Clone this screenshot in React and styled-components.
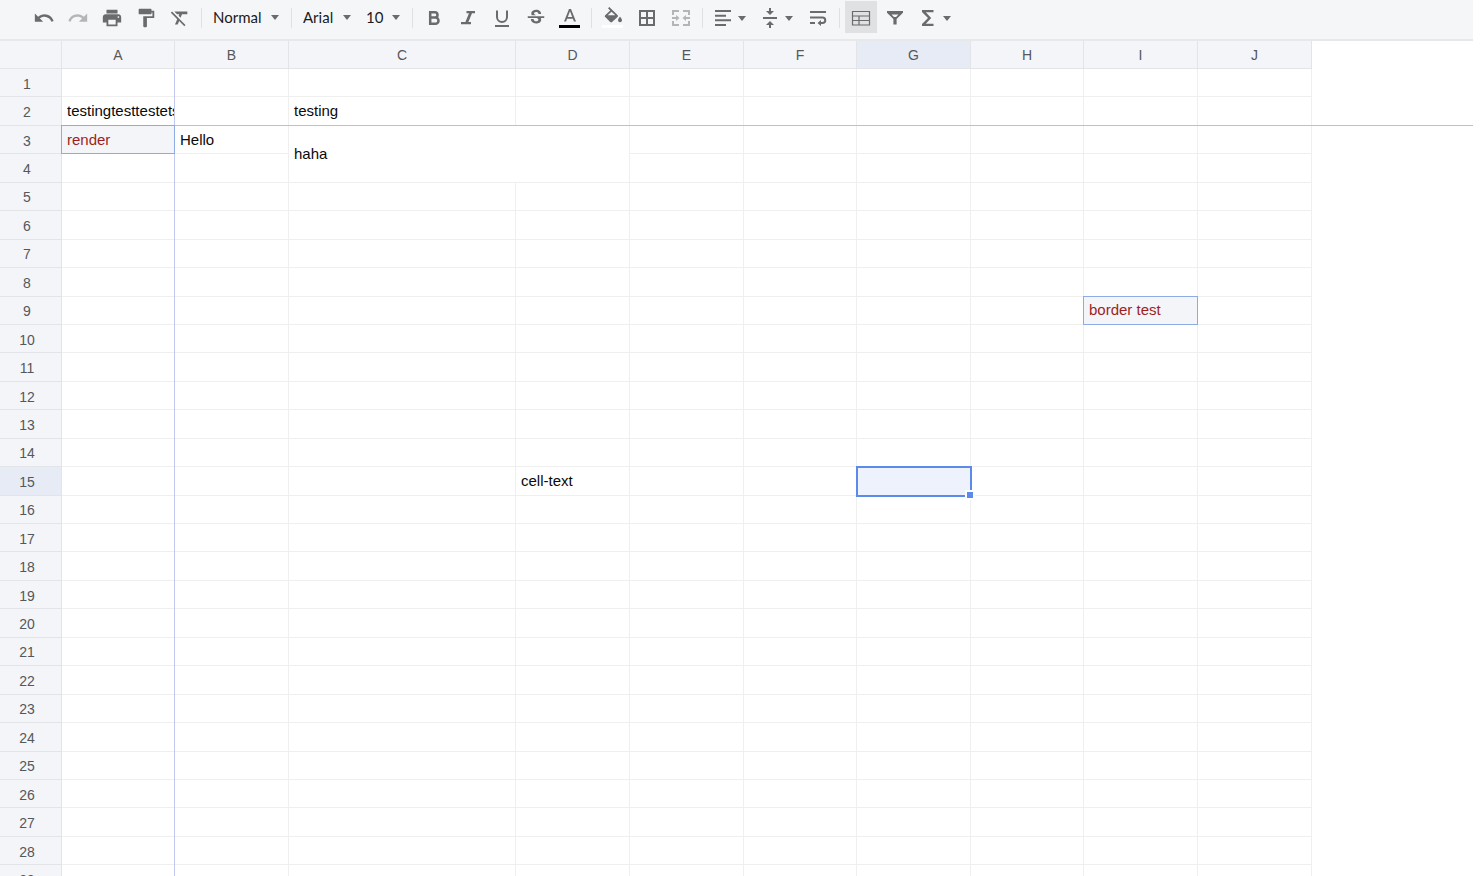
import { Fragment } from "react";
import styled, { createGlobalStyle, css } from "styled-components";
import {
  MdFormatClear,
  MdFormatPaint,
  MdPrint,
  MdRedo,
  MdStrikethroughS,
  MdUndo,
} from "react-icons/md";

const GlobalStyle = createGlobalStyle`
  * {
    box-sizing: border-box;
  }

  body {
    margin: 0;
    background: #fff;
    overflow: hidden;
  }
`;

const Page = styled.div`
  display: flex;
  flex-direction: column;
  height: 100vh;
  padding-right: 9px;
`;

const Toolbar = styled.div`
  display: flex;
  flex: none;
  align-items: flex-start;
  height: 41px;
  padding: 1px 0 0 27px;
  background: #f5f6f7;
  border-bottom: 2px solid #e7e8ea;
`;

const ToolButton = styled.button`
  display: flex;
  flex: none;
  align-items: center;
  justify-content: center;
  width: 32px;
  height: 32px;
  margin: 0 1px;
  padding: 2px 0 0;
  border: 0;
  background: ${(props) => (props.$active ? "#dfe1e2" : "transparent")};
  color: ${(props) => (props.$faded ? "#b4b5b6" : "#6a6b6c")};

  ${(props) =>
    props.$menu &&
    css`
      justify-content: flex-start;
      width: 45px;
      padding-left: 4px;
    `}

  svg {
    flex: none;
    width: 22px;
    height: 22px;
  }
`;

const Caret = styled.i`
  flex: none;
  margin-left: ${(props) => (props.$inButton ? "4px" : "0")};
  border: 4px solid transparent;
  border-top: 5px solid #6a6b6c;
  border-bottom: 0;
  pointer-events: none;
`;

const Divider = styled.span`
  flex: none;
  width: 1px;
  height: 20px;
  margin: 7px 4px 0;
  background: #dfe0e1;
`;

const Picker = styled.label`
  display: grid;
  flex: none;
  grid-template-columns: 1fr 8px;
  align-items: center;
  width: ${(props) => props.$width}px;
  height: 32px;
  padding: 0 8px 0 7px;
`;

const Select = styled.select`
  grid-area: 1 / 1 / 2 / 3;
  width: 100%;
  padding: 0;
  border: 0;
  appearance: none;
  background: transparent;
  color: #1b1b1b;
  font: 15px/20px Lato, sans-serif;

  & + ${Caret} {
    grid-area: 1 / 2;
  }
`;

const Sheet = styled.div`
  position: relative;
  flex: 1;
  min-height: 0;
  overflow: hidden;
`;

const Grid = styled.table`
  width: 1312px;
  table-layout: fixed;
  border-collapse: separate;
  border-spacing: 0;
  height: 853px;
`;

const HeadRow = styled.tr`
  height: 28px;
`;

const Head = styled.th`
  padding: 0;
  border: solid #e3e4e8;
  border-width: 0 1px 1px 0;
  background: ${(props) => (props.$current ? "#e6ebf6" : "#f4f5f8")};
  color: #56575a;
  font: 500 14px/26px "Liberation Sans", Arial, sans-serif;
  text-align: center;
`;

const RowHead = styled(Head)`
  padding: 2px 7px 0 0;
  line-height: 24px;
`;

const Cell = styled.td`
  position: relative;
  padding: 0 0 0 5px;
  border: solid #efeff0;
  border-width: 0 1px 1px 0;
  color: ${(props) => (props.$red ? "#9c1f1f" : "#0a0a0a")};
  background: ${(props) => (props.$red ? "#f4f5f8" : "transparent")};
  font: 15px/26px "Liberation Sans", Arial, sans-serif;

  ${(props) =>
    props.$red &&
    css`
      &::after {
        content: "";
        position: absolute;
        z-index: 1;
        inset: -1px;
        border: 1px solid #8dabe4;
      }
    `}
`;

const CellText = styled.div`
  overflow: hidden;
  white-space: nowrap;
`;

const Selection = styled.div`
  position: absolute;
  z-index: 1;
  inset: -1px -2px -2px -1px;
  border: 2px solid #5c8aea;
  background: #edf2fc;
`;

const FillHandle = styled.span`
  position: absolute;
  right: -5px;
  bottom: -5px;
  width: 10px;
  height: 10px;
  border: 2px solid #fff;
  background: #5c8aea;
`;

const FreezeLine = styled.span`
  position: absolute;
  background: #aac6e6;
  pointer-events: none;

  ${(props) =>
    props.$vertical
      ? css`
          top: 28px;
          bottom: 0;
          left: 174px;
          width: 1px;
          background: #c2c8f0;
        `
      : css`
          top: 84px;
          right: 0;
          left: 62px;
          height: 1px;
        `}
`;

const Glyph = ({ children }) => (
  <svg viewBox="0 0 22 22" fill="currentColor" aria-hidden="true">
    {children}
  </svg>
);

const Strokes = ({ d, width = 2 }) => (
  <Glyph>
    <path fill="none" stroke="currentColor" strokeWidth={width} d={d} />
  </Glyph>
);

const BoldIcon = () => (
  <Strokes
    width={2.5}
    d="M7.200 5.200h4.600a2.700 2.700 0 0 1 0 5.400H7.200zM7.200 10.600h5.200a3.100 3.100 0 0 1 0 6.200H7.200z"
  />
);

const ItalicIcon = () => (
  <Glyph>
    <path d="M9.500 4H18v2.200h-3l-3.600 8.800H14v2.200H4V15h4.400L12 6.200H9.500z" />
  </Glyph>
);

const UnderlineIcon = () => (
  <Strokes d="M6 3.500v6.500a5 5 0 0 0 10 0V3.500M4 19h14" />
);

const TextColorIcon = () => (
  <Glyph>
    <path d="M10 2 5 14.500h2.100l1-2.700h5.800l1 2.700H17L12 2h-2zM8.800 9.900 11 4.200l2.200 5.700H8.800z" />
    <path fill="#000" d="M0 18h21v3H0z" />
  </Glyph>
);

const FillColorIcon = () => (
  <Glyph>
    <path d="M15.500 7.900 7.300 0 6 1.300l2.200 2.100-5 4.800c-.6.6-.6 1.300 0 1.900l5 4.900c.6.500 1.300.500 1.900 0l5.400-5.100c.6-.6.6-1.500 0-2zM5.700 8.300l3.800-3.600 3.800 3.600zM18 9.800s-2 2.200-2 3.400a2 2 0 0 0 4 0c0-1.200-2-3.400-2-3.400z" />
    <path fill="#fff" d="M0 18h21v3H0z" />
  </Glyph>
);

const BordersIcon = () => (
  <Strokes d="M4 4h14v14H4zM11 4v14M4 11h14" />
);

const MergeIcon = () => (
  <Glyph>
    <path d="M2 3h7v2H4v3H2zM13 3h7v5h-2V5h-5zM2 14h2v3h5v2H2zM18 14h2v5h-7v-2h5zM2 10h4V8l3.500 3L6 14v-2H2zM20 10h-4V8l-3.500 3 3.500 3v-2h4z" />
  </Glyph>
);

const AlignLeftIcon = () => (
  <Strokes d="M3 4h16M3 8.700h11M3 13.300h16M3 18h11" />
);

const AlignMiddleIcon = () => (
  <Glyph>
    <path d="M4 10h14v2H4zM10 1h2v3h3l-4 4-4-4h3zM10 21h2v-3h3l-4-4-4 4h3z" />
  </Glyph>
);

const WrapIcon = () => (
  <Glyph>
    <path d="M3 4h16v2H3zM3 15h5v2H3zM3 9.500h12.500a3.700 3.700 0 0 1 0 7.500H14v2l-3.500-3L14 13v2h1.500a1.700 1.700 0 0 0 0-3.500H3z" />
  </Glyph>
);

const FreezeIcon = () => (
  <Strokes
    width={1.2}
    d="M2.500 4.500h17v13.500h-17zM2.500 9h17M2.500 13.500h17M9 9v9"
  />
);

const FilterIcon = () => (
  <Glyph>
    <path
      fillRule="evenodd"
      d="M3 4h16v1.800l-6.400 6.200v5.500H9.400V12L3 5.800zM7.500 7.400 10 10h2l2.500-2.600z"
    />
  </Glyph>
);

const SumIcon = () => (
  <Glyph>
    <path d="M5 3h11.500v2.300H8.800l5.400 5.700-5.400 5.700h7.700V19H5v-2l6-6-6-6z" />
  </Glyph>
);

const toolGroups = [
  [
    { label: "Undo", icon: MdUndo },
    { label: "Redo", icon: MdRedo, faded: true },
    { label: "Print", icon: MdPrint },
    { label: "Paint format", icon: MdFormatPaint },
    { label: "Clear format", icon: MdFormatClear },
  ],
  [{ label: "Format", options: ["Normal", "Text", "Number"], width: 81 }],
  [
    { label: "Font", options: ["Arial", "Helvetica", "Lato"], width: 63 },
    { label: "Font size", options: ["10", "11", "12"], width: 49 },
  ],
  [
    { label: "Bold", icon: BoldIcon },
    { label: "Italic", icon: ItalicIcon },
    { label: "Underline", icon: UnderlineIcon },
    { label: "Strike", icon: MdStrikethroughS },
    { label: "Text color", icon: TextColorIcon },
  ],
  [
    { label: "Fill color", icon: FillColorIcon },
    { label: "Borders", icon: BordersIcon },
    { label: "Merge cells", icon: MergeIcon, faded: true },
  ],
  [
    { label: "Horizontal align", icon: AlignLeftIcon, menu: true },
    { label: "Vertical align", icon: AlignMiddleIcon, menu: true },
    { label: "Text wrapping", icon: WrapIcon },
  ],
  [
    { label: "Freeze cell", icon: FreezeIcon, active: true },
    { label: "Filter", icon: FilterIcon },
    { label: "Functions", icon: SumIcon, menu: true },
  ],
];

const columns = [
  { name: "A", width: 113 },
  { name: "B", width: 114 },
  { name: "C", width: 227 },
  { name: "D", width: 114 },
  { name: "E", width: 114 },
  { name: "F", width: 113 },
  { name: "G", width: 114 },
  { name: "H", width: 113 },
  { name: "I", width: 114 },
  { name: "J", width: 114 },
];

const rows = Array.from({ length: 29 }, (_, i) => i + 1);

const cells = {
  A2: { text: "testingtesttestetst" },
  C2: { text: "testing" },
  A3: { text: "render", red: true },
  B3: { text: "Hello" },
  C3: { text: "haha", colSpan: 2, rowSpan: 2 },
  I9: { text: "border test", red: true },
  D15: { text: "cell-text" },
};

const merged = ["D3", "C4", "D4"];
const current = { column: "G", row: 15 };

function Tool({ tool }) {
  if (tool.options) {
    return (
      <Picker $width={tool.width}>
        <Select aria-label={tool.label}>
          {tool.options.map((option) => (
            <option key={option}>{option}</option>
          ))}
        </Select>
        <Caret />
      </Picker>
    );
  }

  const Icon = tool.icon;
  return (
    <ToolButton
      type="button"
      aria-label={tool.label}
      $active={tool.active}
      $faded={tool.faded}
      $menu={tool.menu}
    >
      <Icon />
      {tool.menu && <Caret $inButton />}
    </ToolButton>
  );
}

function SheetCell({ column, row }) {
  const id = column + row;
  if (merged.includes(id)) return null;

  const cell = cells[id] || {};
  return (
    <Cell $red={cell.red} colSpan={cell.colSpan} rowSpan={cell.rowSpan}>
      {cell.text && <CellText>{cell.text}</CellText>}
      {column === current.column && row === current.row && (
        <Selection>
          <FillHandle />
        </Selection>
      )}
    </Cell>
  );
}

function App() {
  return (
    <Page>
      <GlobalStyle />
      <Toolbar>
        {toolGroups.map((group, i) => (
          <Fragment key={i}>
            {i > 0 && <Divider />}
            {group.map((tool) => (
              <Tool key={tool.label} tool={tool} />
            ))}
          </Fragment>
        ))}
      </Toolbar>
      <Sheet>
        <Grid>
          <colgroup>
            <col width={62} />
            {columns.map((column) => (
              <col key={column.name} width={column.width} />
            ))}
          </colgroup>
          <thead>
            <HeadRow>
              <Head as="td" />
              {columns.map(({ name }) => (
                <Head key={name} scope="col" $current={name === current.column}>
                  {name}
                </Head>
              ))}
            </HeadRow>
          </thead>
          <tbody>
            {rows.map((row) => (
              <tr key={row}>
                <RowHead scope="row" $current={row === current.row}>
                  {row}
                </RowHead>
                {columns.map(({ name }) => (
                  <SheetCell key={name} column={name} row={row} />
                ))}
              </tr>
            ))}
          </tbody>
        </Grid>
        <FreezeLine />
        <FreezeLine $vertical />
      </Sheet>
    </Page>
  );
}

export default App;
